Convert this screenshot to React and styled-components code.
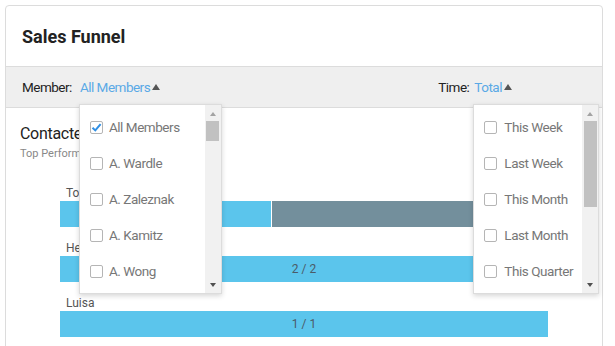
import React from "react";
import styled, { createGlobalStyle } from "styled-components";

const GlobalStyle = createGlobalStyle`
  html, body { margin: 0; padding: 0; background: #fff; overflow: hidden; }
  body { font-family: Roboto, "Liberation Sans", sans-serif; }
`;

const Card = styled.div`
  margin: 5px 0 0 5px;
  width: 598px;
  height: 420px;
  box-sizing: border-box;
  border: 1px solid #dcdcdc;
  border-radius: 4px;
  background: #fff;
`;

const Header = styled.div`
  height: 60px;
  display: flex;
  align-items: center;
  padding-left: 16px;
  border-bottom: 1px solid #dcdcdc;
`;

const Title = styled.h1`
  margin: 0;
  font-size: 18px;
  font-weight: 700;
  color: #222;
`;

const Toolbar = styled.div`
  height: 40px;
  display: flex;
  align-items: center;
  padding: 0 90px 0 16px;
  background: #efefef;
  border-bottom: 1px solid #dcdcdc;
  font-size: 13.5px;
  letter-spacing: -0.5px;
`;

const Filter = styled.div`
  display: flex;
  align-items: center;
  gap: ${(p) => p.$gap}px;
  margin-left: ${(p) => (p.$right ? "auto" : "0")};
`;

const FilterLabel = styled.span`
  color: #222;
`;

const FilterValue = styled.span`
  position: relative;
  display: flex;
  align-items: center;
  color: #5aa9e6;
  line-height: 16px;
`;

const Caret = styled.span`
  width: 0;
  height: 0;
  margin-left: 2px;
  border-left: 4.5px solid transparent;
  border-right: 4.5px solid transparent;
  border-bottom: 6px solid #555;
`;

const Dropdown = styled.div`
  position: absolute;
  left: -1px;
  top: 25px;
  width: ${(p) => p.$width}px;
  height: 190px;
  box-sizing: border-box;
  display: flex;
  background: #fff;
  border: 1px solid #dcdcdc;
  box-shadow: 0 2px 5px rgba(0, 0, 0, 0.16);
  z-index: 10;
  letter-spacing: -0.45px;
`;

const List = styled.ul`
  flex: 1;
  margin: 0;
  padding: 4px 0 0 ${(p) => p.$pad}px;
  list-style: none;
  overflow: hidden;
`;

const Item = styled.li`
  height: 36px;
  display: flex;
  align-items: center;
  gap: ${(p) => p.$gap}px;
  font-size: 13.5px;
  color: #777;
  white-space: nowrap;
`;

const Box = styled.span`
  width: 13px;
  height: 13px;
  flex: none;
  box-sizing: border-box;
  border: 1px solid #b5b5b5;
  border-radius: 2px;
  background: #fff;
  display: flex;
  align-items: center;
  justify-content: center;
`;

const Scrollbar = styled.div`
  width: 16px;
  flex: none;
  background: #f1f1f1;
  display: flex;
  flex-direction: column;
  align-items: center;
  padding: 7px 0 6px;
  box-sizing: border-box;
`;

const Arrow = styled.span`
  width: 0;
  height: 0;
  border-left: 3.5px solid transparent;
  border-right: 3.5px solid transparent;
  ${(p) =>
    p.$down
      ? "border-top: 4px solid #505050; margin-top: auto;"
      : "border-bottom: 4px solid #a3a3a3;"}
`;

const Thumb = styled.div`
  width: 13px;
  height: ${(p) => p.$h}px;
  margin-top: 5px;
  background: #c1c1c1;
`;

const Content = styled.div`
  padding: 16px 14px 0;
`;

const SectionTitle = styled.div`
  font-size: 16px;
  line-height: 19px;
  color: #222;
  letter-spacing: -0.3px;
`;

const Sub = styled.div`
  margin-top: 4px;
  font-size: 11px;
  line-height: 13px;
  color: #888;
`;

const Chart = styled.div`
  margin: 25px 0 0 40px;
  width: 488px;
`;

const Row = styled.div`
  margin-bottom: 13px;
`;

const RowLabel = styled.div`
  padding-left: 6px;
  font-size: 12px;
  line-height: 16px;
  color: #555;
`;

const Bar = styled.div`
  display: flex;
  height: 26px;
  gap: 1px;
`;

const Segment = styled.div`
  flex: ${(p) => p.$grow};
  background: ${(p) => (p.$muted ? "#738f9c" : "#5bc5ec")};
  color: #4b5b68;
  font-size: 12px;
  line-height: 26px;
  text-align: center;
`;

const members = ["All Members", "A. Wardle", "A. Zaleznak", "A. Kamitz", "A. Wong"];
const times = ["This Week", "Last Week", "This Month", "Last Month", "This Quarter"];

const rows = [
  { name: "Tom", segs: [{ grow: 211, text: "1 / 2" }, { grow: 276, text: "", muted: true }] },
  { name: "Helen", segs: [{ grow: 1, text: "2 / 2" }] },
  { name: "Luisa", segs: [{ grow: 1, text: "1 / 1" }] },
];

function Check() {
  return (
    <svg width="11" height="11" viewBox="0 0 11 11">
      <polyline points="1.5,5.8 4.3,8.4 9.6,2.2" fill="none" stroke="#2f8fe4" strokeWidth="2" />
    </svg>
  );
}

function Menu({ items, checked, width, pad, gap, thumb }) {
  return (
    <Dropdown $width={width}>
      <List $pad={pad}>
        {items.map((it, i) => (
          <Item key={it} $gap={gap}>
            <Box>{i === checked && <Check />}</Box>
            {it}
          </Item>
        ))}
      </List>
      <Scrollbar>
        <Arrow />
        <Thumb $h={thumb} />
        <Arrow $down />
      </Scrollbar>
    </Dropdown>
  );
}

export default function App() {
  return (
    <>
      <GlobalStyle />
      <Card>
        <Header>
          <Title>Sales Funnel</Title>
        </Header>
        <Toolbar>
          <Filter $gap={8}>
            <FilterLabel>Member:</FilterLabel>
            <FilterValue>
              All Members
              <Caret />
              <Menu items={members} checked={0} width={143} pad={10} gap={6} thumb={20} />
            </FilterValue>
          </Filter>
          <Filter $right $gap={5}>
            <FilterLabel>Time:</FilterLabel>
            <FilterValue>
              Total
              <Caret />
              <Menu items={times} checked={-1} width={126} pad={10} gap={7} thumb={86} />
            </FilterValue>
          </Filter>
        </Toolbar>
        <Content>
          <SectionTitle>Contacted</SectionTitle>
          <Sub>Top Performers</Sub>
          <Chart>
            {rows.map((r) => (
              <Row key={r.name}>
                <RowLabel>{r.name}</RowLabel>
                <Bar>
                  {r.segs.map((s, i) => (
                    <Segment key={i} $grow={s.grow} $muted={s.muted}>
                      {s.text}
                    </Segment>
                  ))}
                </Bar>
              </Row>
            ))}
          </Chart>
        </Content>
      </Card>
    </>
  );
}
